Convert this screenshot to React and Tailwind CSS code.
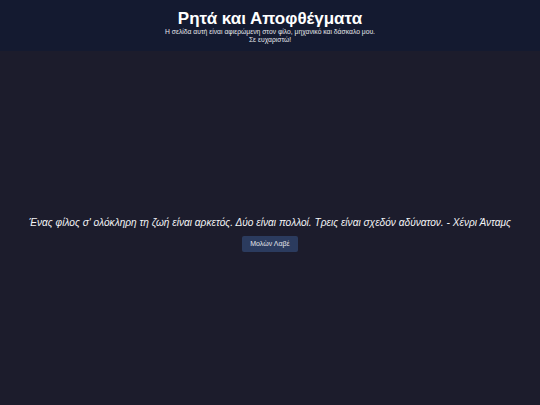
export default function App() {
  return (
    <div className="flex min-h-screen flex-col bg-[#1c1c2c] font-['Liberation_Sans',Arial,sans-serif] text-white">
      <header className="flex h-[51px] shrink-0 flex-col items-center bg-[#141a30] pt-[9px] text-center">
        <h1 className="text-[17px] font-bold leading-[19px]">Ρητά και Αποφθέγματα</h1>
        <p className="text-[6.75px] leading-[8px] text-gray-200">
          Η σελίδα αυτή είναι αφιερώμενη στον φίλο, μηχανικό και δάσκαλο μου.
          <br />
          Σε ευχαριστώ!
        </p>
      </header>
      <main className="flex flex-1 flex-col items-center justify-center pt-[12px]">
        <p className="text-[10.15px] italic leading-[14px] text-gray-100">
          Ένας φίλος σ' ολόκληρη τη ζωή είναι αρκετός. Δύο είναι πολλοί. Τρεις είναι σχεδόν αδύνατον. - Χένρι Άνταμς
        </p>
        <button className="mt-[6px] h-[16px] rounded-[2px] bg-[#2b3b5e] px-[8px] text-[7px] text-gray-200">
          Μολὼν Λαβέ
        </button>
      </main>
    </div>
  )
}
